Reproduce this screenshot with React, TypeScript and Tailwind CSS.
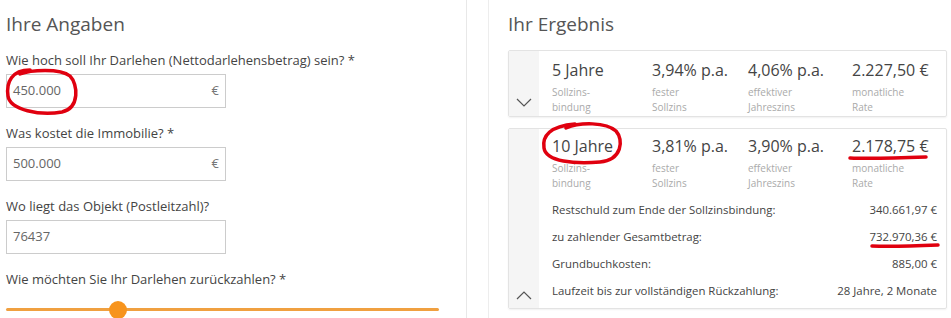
import React from "react";

const font = { fontFamily: '"Open Sans", "Noto Sans", sans-serif' };

function Field({ label, value, euro }: { label: string; value: string; euro?: boolean }) {
  return (
    <div>
      <div className="text-[13px] text-[#444] leading-[18px] h-[18px]">{label}</div>
      <div className="mt-[5px] w-[220px] h-[34px] border border-[#ccc] flex items-center justify-between px-[6px] text-[13px] text-[#666]">
        <span>{value}</span>
        {euro && <span className="text-[#777]">€</span>}
      </div>
    </div>
  );
}

function Chevron({ up }: { up?: boolean }) {
  return (
    <svg width="16" height="10" viewBox="0 0 16 10" className="text-[#555]">
      <path d={up ? "M1 9 L8 2 L15 9" : "M1 1 L8 8 L15 1"} fill="none" stroke="currentColor" strokeWidth="1.2" />
    </svg>
  );
}

const top1 = [
  ["5 Jahre", "Sollzins-", "bindung"],
  ["3,94% p.a.", "fester", "Sollzins"],
  ["4,06% p.a.", "effektiver", "Jahreszins"],
  ["2.227,50 €", "monatliche", "Rate"],
];
const top2 = [
  ["10 Jahre", "Sollzins-", "bindung"],
  ["3,81% p.a.", "fester", "Sollzins"],
  ["3,90% p.a.", "effektiver", "Jahreszins"],
  ["2.178,75 €", "monatliche", "Rate"],
];

const colW = ["w-[100px] shrink-0", "w-[96px] shrink-0", "w-[104px] shrink-0", "flex-1 min-w-0"];

function TopRow({ cols }: { cols: string[][] }) {
  return (
    <div className="flex">
      {cols.map(([v, a, b], i) => (
        <div key={v} className={colW[i]}>
          <div className="text-[16px] leading-[22px] text-[#444] whitespace-nowrap">{v}</div>
          <div className="mt-[4px] text-[10px] leading-[15px] text-[#aaa]">{a}</div>
          <div className="text-[10px] leading-[15px] text-[#aaa]">{b}</div>
        </div>
      ))}
    </div>
  );
}

const details = [
  ["Restschuld zum Ende der Sollzinsbindung:", "340.661,97 €"],
  ["zu zahlender Gesamtbetrag:", "732.970,36 €"],
  ["Grundbuchkosten:", "885,00 €"],
  ["Laufzeit bis zur vollständigen Rückzahlung:", "28 Jahre, 2 Monate"],
];

export default function App() {
  return (
    <div className="w-[951px] h-[318px] overflow-hidden bg-white flex relative" style={font}>
      {/* left */}
      <div className="w-[466px] shrink-0 pl-[6px] pt-[9px]">
        <div className="text-[19px] leading-[30px] text-[#555]">Ihre Angaben</div>
        <div className="mt-[12px] flex flex-col gap-[16px]">
          <Field label="Wie hoch soll Ihr Darlehen (Nettodarlehensbetrag) sein? *" value="450.000" euro />
          <Field label="Was kostet die Immobilie? *" value="500.000" euro />
          <Field label="Wo liegt das Objekt (Postleitzahl)?" value="76437" />
          <div>
            <div className="text-[13px] text-[#444] leading-[18px]">Wie möchten Sie Ihr Darlehen zurückzahlen? *</div>
            <div className="mt-[20px] w-[433px] h-[3px] bg-[#f0a040] rounded-full relative">
              <div className="absolute left-[103px] top-[-7px] w-[18px] h-[18px] rounded-full bg-[#f7941d]" />
            </div>
          </div>
        </div>
      </div>
      <div className="w-px bg-[#e8e8e8] shrink-0" />
      <div className="w-[21px] shrink-0" />
      <div className="w-px bg-[#ededed] shrink-0" />
      {/* right */}
      <div className="flex-1 min-w-0 pl-[19px] pr-[4px] pt-[9px]">
        <div className="text-[19px] leading-[30px] text-[#555]">Ihr Ergebnis</div>
        <div className="mt-[11px] w-[439px] h-[67px] border border-[#e3e3e3] rounded-[2px] flex shadow-[0_1px_2px_rgba(0,0,0,0.06)]">
          <div className="w-[30px] shrink-0 bg-[#f5f5f5] flex items-end justify-center pb-[8px]">
            <Chevron />
          </div>
          <div className="flex-1 min-w-0 pl-[13px] pt-[8px]">
            <TopRow cols={top1} />
          </div>
        </div>
        <div className="mt-[11px] w-[439px] h-[181px] border border-[#e3e3e3] rounded-[2px] flex shadow-[0_1px_2px_rgba(0,0,0,0.06)]">
          <div className="w-[30px] shrink-0 bg-[#f5f5f5] flex items-end justify-center pb-[8px]">
            <Chevron up />
          </div>
          <div className="flex-1 min-w-0 pl-[13px] pr-[9px] pt-[6px]">
            <TopRow cols={top2} />
            <div className="mt-[5px] flex flex-col">
              {details.map(([l, v]) => (
                <div key={l} className="flex justify-between h-[27px] items-center text-[11.4px] text-[#444]">
                  <span>{l}</span>
                  <span>{v}</span>
                </div>
              ))}
            </div>
          </div>
        </div>
      </div>
      {/* annotations */}
      <svg className="absolute inset-0 pointer-events-none" width="951" height="318">
        <g fill="none" stroke="#e0000f" strokeWidth="3.5" strokeLinecap="round">
          <path d="M30 70 C 12 70, 6 82, 8 96 C 10 110, 40 116, 62 112 C 80 108, 78 84, 70 76 C 60 68, 30 70, 20 74" />
          <path d="M575 124 C 550 126, 542 136, 544 148 C 546 162, 575 164, 600 162 C 622 160, 624 140, 616 131 C 606 122, 580 122, 566 128" />
          <path d="M850 158 C 870 159, 900 158, 926 157" />
          <path d="M872 246 C 890 247, 915 246, 938 245" />
        </g>
      </svg>
    </div>
  );
}
